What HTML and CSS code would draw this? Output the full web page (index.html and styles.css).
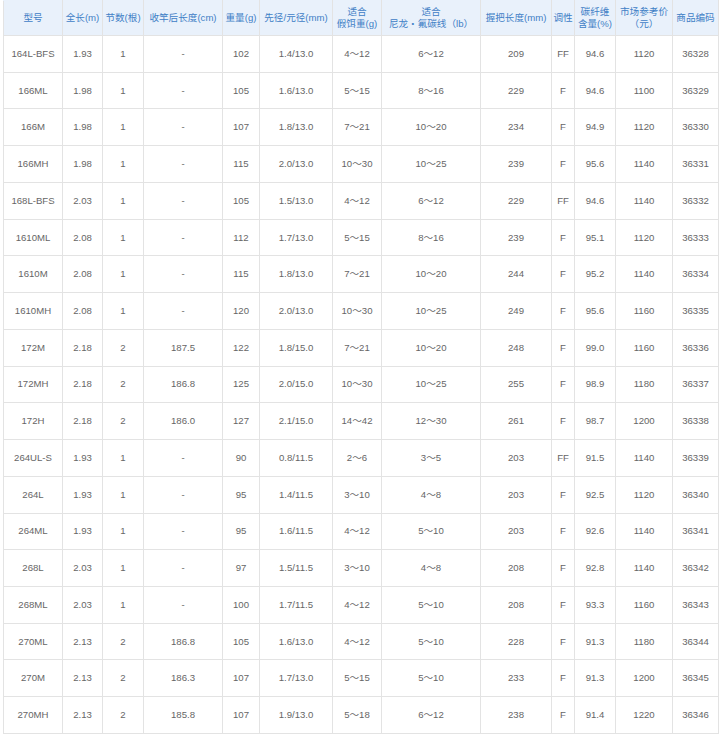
FILE: index.html
```html
<!DOCTYPE html>
<html lang="zh-CN">
<head>
<meta charset="utf-8">
<title>规格表</title>
<link rel="stylesheet" href="styles.css">
</head>
<body>
<table class="spec">
<colgroup>
<col class="c1"><col class="c2"><col class="c3"><col class="c4"><col class="c5"><col class="c6"><col class="c7"><col class="c8"><col class="c9"><col class="c10"><col class="c11"><col class="c12"><col class="c13">
</colgroup>
<thead>
<tr>
<th>型号</th><th>全长(m)</th><th>节数(根)</th><th>收竿后长度(cm)</th><th>重量(g)</th><th>先径/元径(mm)</th><th>适合<br>假饵重(g)</th><th>适合<br>尼龙・氟碳线（lb）</th><th>握把长度(mm)</th><th>调性</th><th>碳纤维<br>含量(%)</th><th>市场参考价<br>（元）</th><th>商品编码</th>
</tr>
</thead>
<tbody>
<tr><td>164L-BFS</td><td>1.93</td><td>1</td><td>-</td><td>102</td><td>1.4/13.0</td><td>4～12</td><td>6～12</td><td>209</td><td>FF</td><td>94.6</td><td>1120</td><td>36328</td></tr>
<tr><td>166ML</td><td>1.98</td><td>1</td><td>-</td><td>105</td><td>1.6/13.0</td><td>5～15</td><td>8～16</td><td>229</td><td>F</td><td>94.6</td><td>1100</td><td>36329</td></tr>
<tr><td>166M</td><td>1.98</td><td>1</td><td>-</td><td>107</td><td>1.8/13.0</td><td>7～21</td><td>10～20</td><td>234</td><td>F</td><td>94.9</td><td>1120</td><td>36330</td></tr>
<tr><td>166MH</td><td>1.98</td><td>1</td><td>-</td><td>115</td><td>2.0/13.0</td><td>10～30</td><td>10～25</td><td>239</td><td>F</td><td>95.6</td><td>1140</td><td>36331</td></tr>
<tr><td>168L-BFS</td><td>2.03</td><td>1</td><td>-</td><td>105</td><td>1.5/13.0</td><td>4～12</td><td>6～12</td><td>229</td><td>FF</td><td>94.6</td><td>1140</td><td>36332</td></tr>
<tr><td>1610ML</td><td>2.08</td><td>1</td><td>-</td><td>112</td><td>1.7/13.0</td><td>5～15</td><td>8～16</td><td>239</td><td>F</td><td>95.1</td><td>1120</td><td>36333</td></tr>
<tr><td>1610M</td><td>2.08</td><td>1</td><td>-</td><td>115</td><td>1.8/13.0</td><td>7～21</td><td>10～20</td><td>244</td><td>F</td><td>95.2</td><td>1140</td><td>36334</td></tr>
<tr><td>1610MH</td><td>2.08</td><td>1</td><td>-</td><td>120</td><td>2.0/13.0</td><td>10～30</td><td>10～25</td><td>249</td><td>F</td><td>95.6</td><td>1160</td><td>36335</td></tr>
<tr><td>172M</td><td>2.18</td><td>2</td><td>187.5</td><td>122</td><td>1.8/15.0</td><td>7～21</td><td>10～20</td><td>248</td><td>F</td><td>99.0</td><td>1160</td><td>36336</td></tr>
<tr><td>172MH</td><td>2.18</td><td>2</td><td>186.8</td><td>125</td><td>2.0/15.0</td><td>10～30</td><td>10～25</td><td>255</td><td>F</td><td>98.9</td><td>1180</td><td>36337</td></tr>
<tr><td>172H</td><td>2.18</td><td>2</td><td>186.0</td><td>127</td><td>2.1/15.0</td><td>14～42</td><td>12～30</td><td>261</td><td>F</td><td>98.7</td><td>1200</td><td>36338</td></tr>
<tr><td>264UL-S</td><td>1.93</td><td>1</td><td>-</td><td>90</td><td>0.8/11.5</td><td>2～6</td><td>3～5</td><td>203</td><td>FF</td><td>91.5</td><td>1140</td><td>36339</td></tr>
<tr><td>264L</td><td>1.93</td><td>1</td><td>-</td><td>95</td><td>1.4/11.5</td><td>3～10</td><td>4～8</td><td>203</td><td>F</td><td>92.5</td><td>1120</td><td>36340</td></tr>
<tr><td>264ML</td><td>1.93</td><td>1</td><td>-</td><td>95</td><td>1.6/11.5</td><td>4～12</td><td>5～10</td><td>203</td><td>F</td><td>92.6</td><td>1140</td><td>36341</td></tr>
<tr><td>268L</td><td>2.03</td><td>1</td><td>-</td><td>97</td><td>1.5/11.5</td><td>3～10</td><td>4～8</td><td>208</td><td>F</td><td>92.8</td><td>1140</td><td>36342</td></tr>
<tr><td>268ML</td><td>2.03</td><td>1</td><td>-</td><td>100</td><td>1.7/11.5</td><td>4～12</td><td>5～10</td><td>208</td><td>F</td><td>93.3</td><td>1160</td><td>36343</td></tr>
<tr><td>270ML</td><td>2.13</td><td>2</td><td>186.8</td><td>105</td><td>1.6/13.0</td><td>4～12</td><td>5～10</td><td>228</td><td>F</td><td>91.3</td><td>1180</td><td>36344</td></tr>
<tr><td>270M</td><td>2.13</td><td>2</td><td>186.3</td><td>107</td><td>1.7/13.0</td><td>5～15</td><td>5～10</td><td>233</td><td>F</td><td>91.3</td><td>1200</td><td>36345</td></tr>
<tr><td>270MH</td><td>2.13</td><td>2</td><td>185.8</td><td>107</td><td>1.9/13.0</td><td>5～18</td><td>6～12</td><td>238</td><td>F</td><td>91.4</td><td>1220</td><td>36346</td></tr>
</tbody>
</table>
</body>
</html>
```
FILE: styles.css
```css
html, body {
  margin: 0;
  padding: 0;
  background: #ffffff;
}
body {
  padding-left: 3px;
  font-family: "Liberation Sans", Arial, "Noto Sans CJK SC", sans-serif;
}
.spec {
  border-collapse: collapse;
  table-layout: fixed;
  width: 716px;
  font-size: 9.6px;
  color: #666666;
}
.c1 { width: 59px; }
.c2 { width: 40px; }
.c3 { width: 41px; }
.c4 { width: 79px; }
.c5 { width: 37px; }
.c6 { width: 73px; }
.c7 { width: 49px; }
.c8 { width: 99px; }
.c9 { width: 71px; }
.c10 { width: 23px; }
.c11 { width: 41px; }
.c12 { width: 57px; }
.c13 { width: 46px; }
.spec th,
.spec td {
  border: 1px solid #e3e3e3;
  text-align: center;
  vertical-align: middle;
  padding: 0;
  white-space: nowrap;
  overflow: hidden;
}
.spec th {
  background: #e9f1fb;
  color: #3f80c6;
  font-weight: normal;
  line-height: 12.5px;
  height: 34px;
  border-top-color: #e9f1fb;
}
.spec td {
  height: 35.74px;
  line-height: 12px;
}
```
